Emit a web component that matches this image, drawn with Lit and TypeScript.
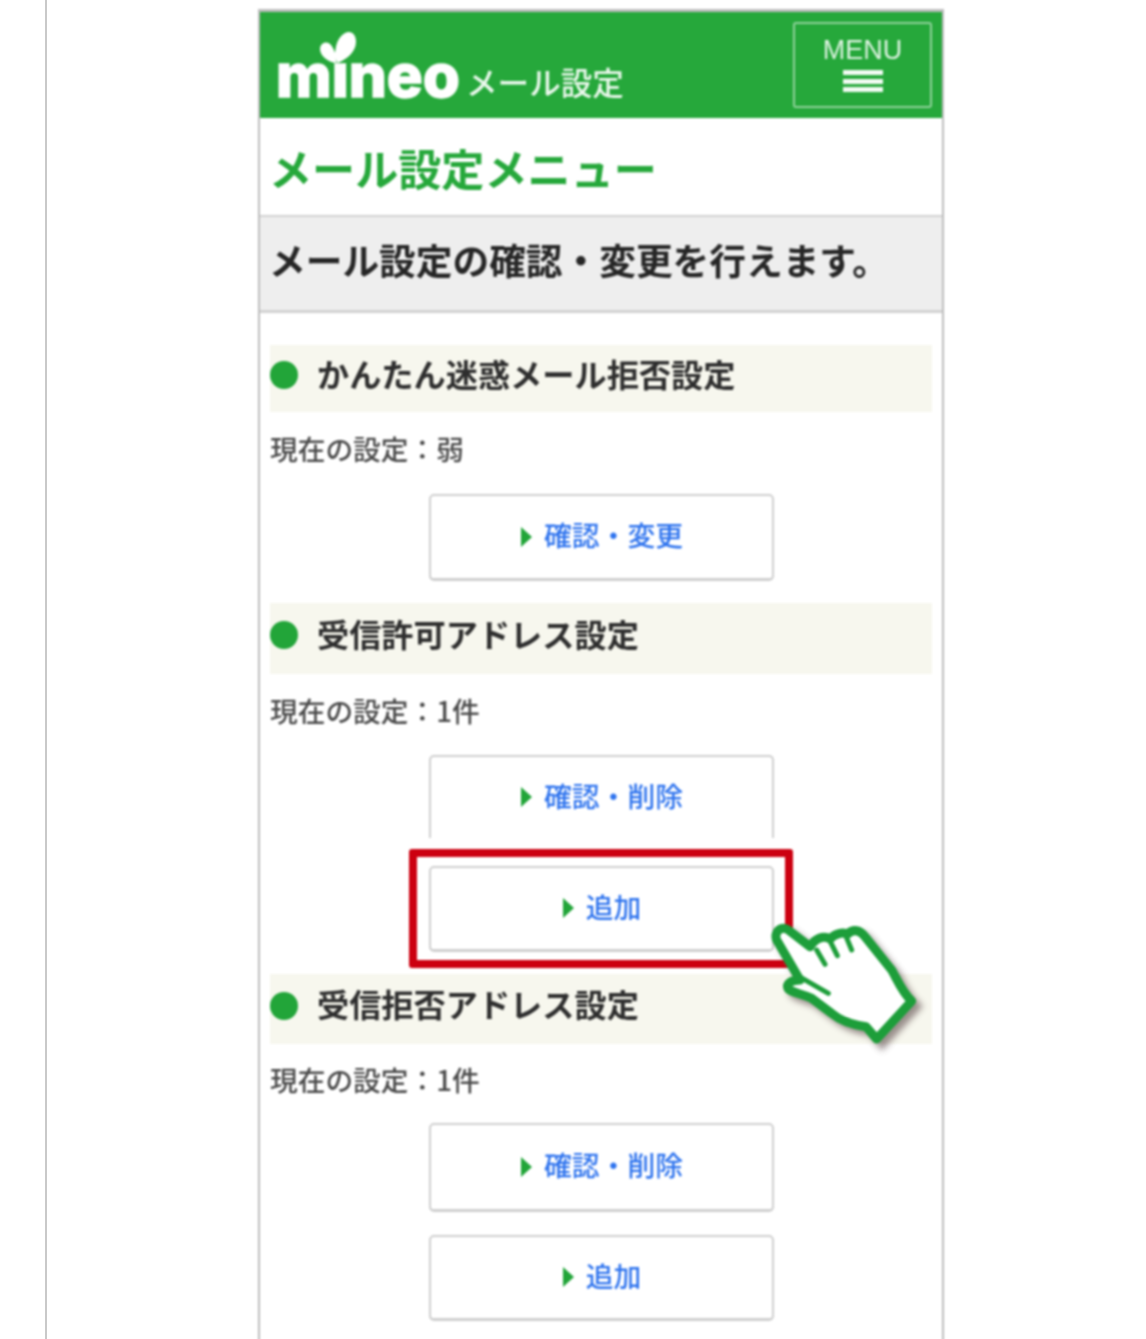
import { LitElement, html, css, svg } from "lit";
import { customElement } from "lit/decorators.js";

const HAND =
  "M50 75 C40 50 65 30 85 45 L150 95 C165 70 190 60 210 72 C225 55 250 50 262 58 C280 40 300 45 315 65 L395 165 C410 190 425 230 455 258 L350 372 L318 335 C280 330 245 320 215 295 L155 250 C125 235 100 235 85 222 C75 205 95 195 120 195 Z";

interface Btn {
  label: string;
  height: number;
  open?: boolean;
  marked?: boolean;
}

interface Section {
  title: string;
  value: string;
  headHeight: number;
  rowHeight: number;
  gap: number;
  buttons: Btn[];
}

const SECTIONS: Section[] = [
  {
    title: "かんたん迷惑メール拒否設定",
    value: "現在の設定：弱",
    headHeight: 67,
    rowHeight: 82,
    gap: 0,
    buttons: [{ label: "確認・変更", height: 87 }],
  },
  {
    title: "受信許可アドレス設定",
    value: "現在の設定：1件",
    headHeight: 71,
    rowHeight: 81,
    gap: 28,
    buttons: [
      { label: "確認・削除", height: 83, open: true },
      { label: "追加", height: 86, marked: true },
    ],
  },
  {
    title: "受信拒否アドレス設定",
    value: "現在の設定：1件",
    headHeight: 70,
    rowHeight: 79,
    gap: 23,
    buttons: [
      { label: "確認・削除", height: 89 },
      { label: "追加", height: 86 },
    ],
  },
];

@customElement("app-root")
export class AppRoot extends LitElement {
  static styles = css`
    :host {
      display: block;
      height: 1339px;
      overflow: hidden;
      background: #fff;
      font-family: "Noto Sans CJK JP", "Liberation Sans", sans-serif;
    }

    .page {
      height: 1339px;
      margin-left: 45px;
      padding: 9px 0 0 211px;
      border-left: 2px solid #c9c9c9;
      box-sizing: border-box;
    }

    .phone {
      position: relative;
      width: 686px;
      height: 1400px;
      box-sizing: border-box;
      border: solid #bdbdbd;
      border-width: 3px 2px 0;
      filter: blur(0.8px);
    }

    .header {
      height: 106px;
      background: #26a83b;
      display: flex;
      justify-content: space-between;
      padding: 10px 10px 0 16px;
      box-sizing: border-box;
      color: #fff;
    }

    .brand {
      position: relative;
      display: flex;
      align-items: flex-start;
    }

    .logo {
      margin-top: 18px;
      font-family: Inter, "Liberation Sans", sans-serif;
      font-weight: 800;
      font-size: 60px;
      line-height: 70px;
      -webkit-text-stroke: 1.5px #fff;
    }

    .sprout {
      position: absolute;
      left: 42px;
      top: 8px;
      width: 40px;
      height: 36px;
    }

    .brand-sub {
      margin: 43px 0 0 6px;
      font-size: 31.6px;
      line-height: 32px;
      font-weight: 500;
      color: #eaf8ec;
    }

    .menu {
      width: 139px;
      height: 86px;
      box-sizing: border-box;
      border: 2px solid #8ed29a;
      border-radius: 3px;
      display: flex;
      flex-direction: column;
      align-items: center;
      padding-top: 10px;
      font-family: "Liberation Sans", sans-serif;
      font-size: 27px;
      line-height: 32px;
      color: #dcf2e0;
    }

    .bars {
      width: 40px;
      height: 22px;
      margin-top: 4px;
      display: flex;
      flex-direction: column;
      justify-content: space-between;
    }

    .bars span {
      height: 5px;
      background: #f2fbf3;
    }

    .title {
      height: 97px;
      display: flex;
      align-items: center;
      padding-left: 9px;
      box-sizing: border-box;
      font-size: 43.1px;
      font-weight: 700;
      color: #26a83b;
      white-space: nowrap;
    }

    .lead {
      height: 98px;
      display: flex;
      align-items: center;
      padding: 0 0 10px 9px;
      box-sizing: border-box;
      background: #eeeeee;
      border: solid #d2d2d2;
      border-width: 2px 0 3px;
      font-size: 36.7px;
      font-weight: 700;
      color: #262626;
      white-space: nowrap;
    }

    .content {
      padding: 32px 10px 0;
    }

    .head {
      display: flex;
      align-items: center;
      gap: 19px;
      padding-bottom: 12px;
      box-sizing: border-box;
      background: #f7f7ee;
      font-size: 32.2px;
      font-weight: 700;
      color: #2e2e2e;
      white-space: nowrap;
    }

    .dot {
      width: 28px;
      height: 28px;
      margin-top: 5px;
      border-radius: 50%;
      background: #22a539;
    }

    .value {
      display: flex;
      align-items: center;
      padding-bottom: 10px;
      box-sizing: border-box;
      font-size: 27.7px;
      font-weight: 500;
      color: #4a4a4a;
      white-space: nowrap;
    }

    .buttons {
      display: flex;
      flex-direction: column;
      align-items: center;
      margin-bottom: 22px;
    }

    .btn {
      position: relative;
      width: 345px;
      box-sizing: border-box;
      border: 2px solid #cfcfcf;
      border-bottom-width: 3px;
      border-radius: 5px;
      padding-bottom: 6px;
      display: flex;
      align-items: center;
      justify-content: center;
      gap: 12px;
      font-size: 27.8px;
      font-weight: 500;
      color: #2f74ee;
    }

    .btn.open {
      border-bottom: 0;
      border-radius: 5px 5px 0 0;
    }

    .btn.marked::after {
      content: "";
      position: absolute;
      inset: -19px -21px -19px -22px;
      border: 8px solid #cc0010;
      border-radius: 3px;
    }

    .arrow {
      width: 0;
      height: 0;
      margin: 5px 0 0 2px;
      border-style: solid;
      border-width: 10px 0 10px 11px;
      border-color: transparent transparent transparent #22a539;
    }

    .hand {
      position: absolute;
      left: 500px;
      top: 903px;
      width: 170px;
      height: 135px;
      overflow: visible;
    }
  `;

  private renderSection(s: Section) {
    return html`
      <div class="head" style="height: ${s.headHeight}px">
        <span class="dot"></span>${s.title}
      </div>
      <div class="value" style="height: ${s.rowHeight}px">${s.value}</div>
      <div class="buttons" style="gap: ${s.gap}px">
        ${s.buttons.map(
          (b) => html`
            <div
              class="btn ${b.open ? "open" : ""} ${b.marked ? "marked" : ""}"
              style="height: ${b.height}px"
            >
              <span class="arrow"></span>${b.label}
            </div>
          `
        )}
      </div>
    `;
  }

  render() {
    return html`
      <div class="page">
        <div class="phone">
          <div class="header">
            <div class="brand">
              <span class="logo">mineo</span>
              <svg class="sprout" viewBox="0 0 40 36">
                <path fill="#fff" d="M19 33 C15 22 18 8 27 3 C33 0 38 4 38 12 C38 22 28 30 19 33 Z" />
                <path fill="#fff" d="M18 33 C10 32 2 26 2 19 C2 13 9 10 13 15 C17 20 18 26 18 33 Z" />
              </svg>
              <span class="brand-sub">メール設定</span>
            </div>
            <div class="menu">
              MENU
              <div class="bars"><span></span><span></span><span></span></div>
            </div>
          </div>
          <div class="title">メール設定メニュー</div>
          <div class="lead">メール設定の確認・変更を行えます。</div>
          <div class="content">${SECTIONS.map((s) => this.renderSection(s))}</div>
          <svg class="hand" viewBox="0 0 510 405">
            <defs>
              <filter id="soft" x="-20%" y="-20%" width="140%" height="140%">
                <feGaussianBlur stdDeviation="9" />
              </filter>
            </defs>
            ${svg`
              <path d=${HAND} fill="#5a4a4a" stroke="#5a4a4a" stroke-width="26" opacity="0.6" transform="translate(16 16)" filter="url(#soft)" />
              <path d=${HAND} fill="#fff" stroke="#1d9e3a" stroke-width="27" stroke-linejoin="round" />
              <path d="M118 185 L205 235 M170 105 L195 148 M212 82 L232 122 M258 64 L275 105" fill="none" stroke="#1d9e3a" stroke-width="15" stroke-linecap="round" />
            `}
          </svg>
        </div>
      </div>
    `;
  }
}
